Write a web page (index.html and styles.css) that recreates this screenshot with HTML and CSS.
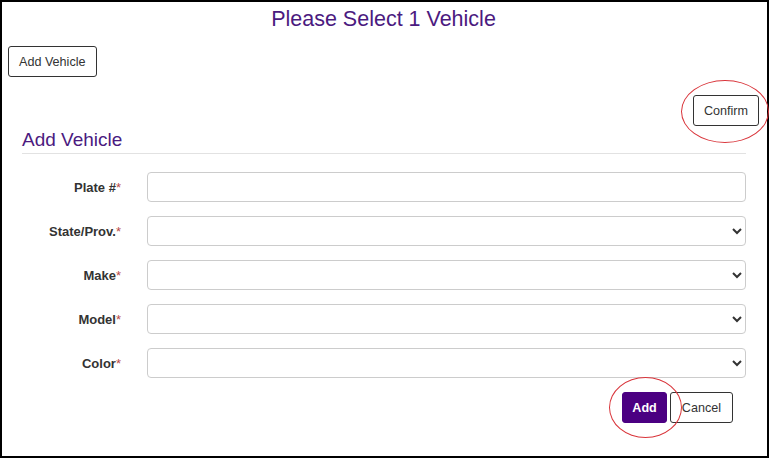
FILE: index.html
```html
<!DOCTYPE html>
<html>
  <head>
    <meta name="viewport" content="width=device-width, initial-scale=1.0">
    <title>Select Vehicle</title>
    <link rel="stylesheet" href="styles.css">
  </head>
  <body>
    <div class="frame">
      <h1 class="title">Please Select 1 Vehicle</h1>

      <div class="toolbar">
        <button type="button" class="btn">Add Vehicle</button>
      </div>

      <div class="confirm-row">
        <span class="mark-wrap">
          <button type="button" class="btn">Confirm</button>
          <span class="mark mark-confirm"></span>
        </span>
      </div>

      <div class="panel">
        <h2 class="panel-title">Add Vehicle</h2>

        <form class="vehicle-form">
          <div class="row">
            <label class="lbl">Plate #<span class="req">*</span></label>
            <input type="text" class="field">
          </div>
          <div class="row">
            <label class="lbl">State/Prov.<span class="req">*</span></label>
            <select class="field"><option></option></select>
          </div>
          <div class="row">
            <label class="lbl">Make<span class="req">*</span></label>
            <select class="field"><option></option></select>
          </div>
          <div class="row">
            <label class="lbl">Model<span class="req">*</span></label>
            <select class="field"><option></option></select>
          </div>
          <div class="row">
            <label class="lbl">Color<span class="req">*</span></label>
            <select class="field"><option></option></select>
          </div>

          <div class="actions">
            <span class="mark-wrap">
              <button type="button" class="btn btn-primary">Add</button>
              <span class="mark mark-add"></span>
            </span>
            <button type="button" class="btn btn-cancel">Cancel</button>
          </div>
        </form>
      </div>
    </div>
  </body>
</html>
```

FILE: styles.css
```css
html, body {
  margin: 0;
  padding: 0;
  background: #fff;
}

.frame {
  box-sizing: border-box;
  width: 769px;
  height: 458px;
  border: 2px solid #000;
  padding: 0 8px 0 6px;
  font-family: "Liberation Sans", Arial, sans-serif;
  color: #333;
}

.title {
  margin: 0;
  padding-top: 5px;
  font-size: 21.5px;
  font-weight: normal;
  line-height: 25px;
  text-align: center;
  color: #4b1a7f;
}

.toolbar {
  margin-top: 14px;
}

.btn {
  box-sizing: border-box;
  height: 31px;
  padding: 0 10px;
  font-family: "Liberation Sans", Arial, sans-serif;
  font-size: 12.6px;
  color: #333;
  background: #fff;
  border: 1px solid #333;
  border-radius: 3px;
  cursor: pointer;
}

.btn-primary {
  padding: 0 9px;
  background: #4b0082;
  border-color: #4b0082;
  color: #fff;
  font-weight: bold;
}

.btn-cancel {
  padding: 0 11px;
}

.confirm-row {
  display: flex;
  justify-content: flex-end;
  margin-top: 18px;
}

.mark-wrap {
  position: relative;
  display: inline-block;
}

.mark {
  position: absolute;
  border: 1px solid #d9353b;
  border-radius: 50%;
  pointer-events: none;
}

.mark-confirm {
  left: -12px;
  top: -15px;
  width: 86px;
  height: 61px;
}

.mark-add {
  left: -13px;
  top: -15px;
  width: 71px;
  height: 59px;
}

.panel {
  padding: 0 13px 0 14px;
}

.panel-title {
  margin: 0;
  padding: 3px 0 2px;
  font-size: 19px;
  font-weight: normal;
  line-height: 22px;
  color: #4b1a7f;
  border-bottom: 1px solid #e2e2e2;
}

.vehicle-form {
  padding-top: 18px;
}

.row {
  display: flex;
  align-items: center;
  margin-bottom: 14px;
}

.lbl {
  width: 99px;
  padding-right: 26px;
  text-align: right;
  font-size: 13px;
  font-weight: bold;
  color: #333;
}

.req {
  color: #b94a48;
  font-weight: normal;
}

.field {
  box-sizing: border-box;
  flex: 1;
  height: 30px;
  border: 1px solid #ccc;
  border-radius: 4px;
  background: #fff;
  font-family: "Liberation Sans", Arial, sans-serif;
  font-size: 13px;
  color: #333;
}

.actions {
  display: flex;
  justify-content: flex-end;
  gap: 3px;
  padding-right: 13px;
}
```
